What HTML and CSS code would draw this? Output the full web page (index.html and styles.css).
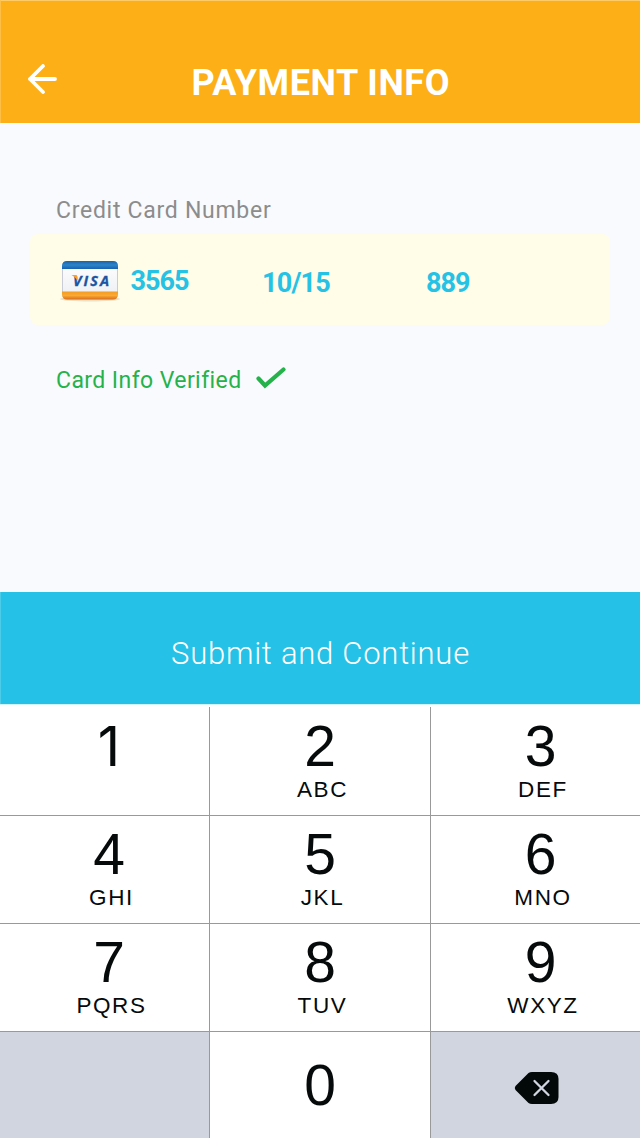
FILE: index.html
```html
<!DOCTYPE html>
<html lang="en">
<head>
<meta charset="utf-8">
<title>Payment Info</title>
<link rel="stylesheet" href="styles.css">
</head>
<body>
<div class="screen">
  <header class="header">
    <svg class="back" width="30" height="30" viewBox="0 0 30 30"><path d="M15 2 2 15 15 28M2 15H27" fill="none" stroke="#fff" stroke-width="3.800" stroke-linecap="round" stroke-linejoin="round"/></svg>
    <h1 class="title">PAYMENT INFO</h1>
  </header>
  <main class="content">
    <div class="label">Credit Card Number</div>
    <div class="card">
      <svg class="visa" width="62" height="44" viewBox="0 0 62 44">
        <defs>
          <linearGradient id="blue" x2="0" y2="1"><stop stop-color="#1d60ad"/><stop offset=".5" stop-color="#2a86c8"/><stop offset="1" stop-color="#1960b0"/></linearGradient>
          <linearGradient id="gold" x2="0" y2="1"><stop stop-color="#f49a20"/><stop offset=".5" stop-color="#faaa32"/><stop offset="1" stop-color="#d96b1c"/></linearGradient>
          <linearGradient id="face" x2="0" y2="1"><stop stop-color="#fff"/><stop offset="1" stop-color="#ebedf2"/></linearGradient>
        </defs>
        <ellipse cx="31" cy="39" rx="30" ry="2.500" fill="#c9ad83" opacity=".35"/>
        <rect x="3.500" y="2" width="55" height="37" rx="4.500" fill="url(#face)" stroke="#c9ccd6"/>
        <path d="M3 9V6Q3 1 8 1H54Q59 1 59 6V9Z" fill="url(#blue)"/>
        <path d="M3 31.500H59V34Q59 39.500 54 39.500H8Q3 39.500 3 34Z" fill="url(#gold)"/>
        <text x="14" y="25.500" class="visa-mark" textLength="36" lengthAdjust="spacing">VISA</text>
        <path d="M12.500 15H17Q18.500 15 18.800 18L18.500 20.500Q16.500 17 12.500 15Z" fill="#f7a02b"/>
      </svg>
      <span class="digits">3565</span>
      <span class="expiry">10/15</span>
      <span class="cvv">889</span>
    </div>
    <div class="status"><span>Card Info Verified</span>
      <svg width="30" height="22" viewBox="0 0 30 22"><path d="M2.500 11.500 9 18.500 27.500 2.500" fill="none" stroke="#25b24b" stroke-width="4.200" stroke-linecap="round" stroke-linejoin="miter"/></svg>
    </div>
  </main>
  <button class="submit">Submit and Continue</button>
  <div class="keypad">
    <div class="key left"><b class="one">1</b></div>
    <div class="key mid"><b>2</b><small>ABC</small></div>
    <div class="key right"><b>3</b><small>DEF</small></div>
    <div class="key left"><b>4</b><small>GHI</small></div>
    <div class="key mid"><b>5</b><small>JKL</small></div>
    <div class="key right"><b>6</b><small>MNO</small></div>
    <div class="key left"><b>7</b><small>PQRS</small></div>
    <div class="key mid"><b>8</b><small>TUV</small></div>
    <div class="key right"><b>9</b><small>WXYZ</small></div>
    <div class="key left last muted"></div>
    <div class="key mid last zero"><b>0</b></div>
    <div class="key right last muted delete">
      <svg width="46" height="34" viewBox="0 0 46 34"><path d="M14.500 2Q16 1 18 1H37Q44.500 1 44.500 8V26Q44.500 33 37 33H18Q16 33 14.500 32L1.500 19Q0 17 1.500 15Z" fill="#030809"/><path d="M20.500 10 34.500 24M34.500 10 20.500 24" stroke="#d1d5df" stroke-width="2.300" stroke-linecap="round"/></svg>
    </div>
  </div>
</div>
</body>
</html>
```

FILE: styles.css
```css
* { box-sizing: border-box; }
body { margin: 0; background: #f9fafd; font-family: Roboto, "Liberation Sans", sans-serif; }
.screen { width: 640px; height: 1138px; display: flex; flex-direction: column; overflow: hidden; }
.header { height: 123px; flex: none; background: #fcaf17; border-top: 1px solid #fdcb68; border-left: 1px solid #fdbf45; display: flex; align-items: flex-start; padding: 63px 0 0 27px; }
.back { flex: none; }
.title { margin: -1px 0 0 133.5px; color: #fff; font-size: 36px; line-height: 40px; font-weight: 700; letter-spacing: .55px; white-space: nowrap; }
.content { height: 469px; flex: none; padding: 74px 30px 0; }
.label { height: 37px; padding-left: 26px; line-height: 28px; font-size: 23px; letter-spacing: .72px; color: #8c8c8c; white-space: nowrap; }
.card { height: 91px; border-radius: 8px; background: #fffde8; color: #26c2e5; font-size: 27px; font-weight: 700; line-height: 30px; letter-spacing: -1px; display: grid; grid-template-columns: 100.5px 131.5px 164px 1fr; align-items: start; padding-top: 26px; }
.visa { margin-left: 29px; }
.visa-mark { font: italic 700 14.500px "Open Sans", sans-serif; letter-spacing: 0; fill: #1a54a2; stroke: #1a54a2; stroke-width: .3px; }
.digits { margin-top: 6px; }
.expiry, .cvv { margin-top: 8px; }
.expiry { letter-spacing: -.8px; }
.status { display: flex; align-items: center; gap: 14px; margin-top: 41px; padding-left: 26px; height: 28px; font-size: 23px; letter-spacing: .42px; color: #25b24b; white-space: nowrap; }
.status svg { margin-top: -4px; }
.submit { height: 112px; flex: none; border: 0; border-left: 1px solid #4bcce9; padding: 10px 0 0; background: #25c1e6; color: #fff; font: 300 31px Roboto, sans-serif; letter-spacing: .75px; }
.keypad { flex: none; background: #fff; border-top: 1px solid #d3f3fa; padding-top: 2px; display: grid; grid-template-columns: 210px 221px 209px; grid-template-rows: 109px 108px 108px 106px; font-family: "Liberation Sans", Arial, sans-serif; color: #060a0b; }
.key { display: flex; flex-direction: column; align-items: center; justify-content: flex-end; padding-bottom: 11px; border-right: 1px solid #999; border-bottom: 1px solid #999; }
.key b { font-weight: 400; font-size: 57px; line-height: 60px; height: 60px; }
.key small { font-size: 22.500px; line-height: 28px; height: 28px; letter-spacing: 1.6px; padding-left: 5px; }
.key.left { padding-left: 9px; }
.key .one { margin-bottom: 28px; font-family: Inter, sans-serif; font-size: 55px; }
.key.right { padding-left: 10px; border-right: 0; }
.key.last { border-bottom: 0; }
.key.zero { justify-content: flex-start; padding-top: 23px; }
.muted { background: #d1d5df; }
.key.delete { justify-content: flex-start; padding: 39px 0 0 2px; }
```
